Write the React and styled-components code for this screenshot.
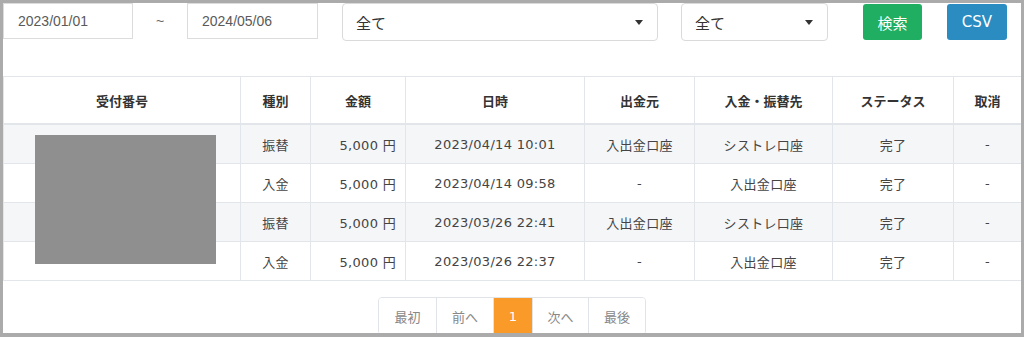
import styled, { createGlobalStyle } from 'styled-components'

const GlobalStyle = createGlobalStyle`
  body {
    margin: 0;
    background: #ffffff;
    font-family: "DejaVu Sans", "Noto Sans CJK JP", sans-serif;
  }
`

const Frame = styled.div`
  width: 1024px;
  height: 337px;
  box-sizing: border-box;
  border-style: solid;
  border-color: #ababab;
  border-width: 3px 3px 4px 3px;
  background: #ffffff;
  overflow: hidden;
  display: flex;
  flex-direction: column;
`

const FilterBar = styled.div`
  display: flex;
  align-items: flex-start;
  height: 38px;
`

const DateInput = styled.div`
  box-sizing: border-box;
  width: ${({ $w }) => $w}px;
  height: 36px;
  border: 1px solid #dcdcdc;
  padding-left: 14px;
  display: flex;
  align-items: center;
  font-family: "Liberation Sans", "Noto Sans CJK JP", sans-serif;
  font-size: 14px;
  color: #5a5a5a;
`

const Tilde = styled.span`
  width: 54px;
  text-align: center;
  line-height: 36px;
  font-family: "Liberation Sans", sans-serif;
  font-size: 14px;
  color: #666;
`

const Select = styled.div`
  box-sizing: border-box;
  width: ${({ $w }) => $w}px;
  height: 38px;
  margin-left: ${({ $ml }) => $ml}px;
  border: 1px solid #dadada;
  border-radius: 4px;
  padding: 0 14px 0 13px;
  display: flex;
  align-items: center;
  justify-content: space-between;
  font-family: "Noto Sans CJK JP", sans-serif;
  font-size: 15px;
  color: #333;
`

const Caret = styled.span`
  width: 0;
  height: 0;
  border-left: 4px solid transparent;
  border-right: 4px solid transparent;
  border-top: 5px solid #333;
  margin-top: 1px;
`

const Button = styled.div`
  box-sizing: border-box;
  width: ${({ $w }) => $w}px;
  height: 36px;
  margin-top: 1px;
  margin-left: ${({ $ml }) => $ml}px;
  border-radius: 3px;
  background: ${({ $bg }) => $bg};
  color: #ffffff;
  display: flex;
  align-items: center;
  justify-content: center;
  font-family: "DejaVu Sans", "Noto Sans CJK JP", sans-serif;
  font-size: 15px;
`

const TableWrap = styled.div`
  position: relative;
  margin-top: 35px;
`

const Table = styled.table`
  width: 100%;
  table-layout: fixed;
  border-collapse: collapse;
  font-family: "DejaVu Sans", "Noto Sans CJK JP", sans-serif;
  font-size: 13px;
  letter-spacing: 0.3px;
  color: #444;
`

const Col = styled.col`
  width: ${({ $w }) => $w}px;
`

const Th = styled.th`
  height: 46px;
  padding: 0;
  border: 1px solid #e2e5e9;
  border-bottom: 2px solid #e2e5e9;
  font-weight: 700;
  letter-spacing: 0;
  color: #333;
  text-align: center;
`

const Row = styled.tr`
  background: ${({ $striped }) => ($striped ? '#f5f6f8' : '#ffffff')};
`

const Td = styled.td`
  height: 38px;
  padding: 0 ${({ $right }) => ($right ? '9px' : '0')} 0 0;
  border: 1px solid #e2e5e9;
  text-align: ${({ $right }) => ($right ? 'right' : 'center')};
  white-space: nowrap;
`

const Redaction = styled.div`
  position: absolute;
  left: 32px;
  top: 59px;
  width: 181px;
  height: 129px;
  background: #8f8f8f;
`

const Pager = styled.div`
  display: flex;
  justify-content: center;
  margin-top: 16px;
`

const PagerGroup = styled.div`
  display: flex;
  border: 1px solid #e0e3e7;
  border-radius: 4px;
  overflow: hidden;
`

const PageItem = styled.div`
  box-sizing: border-box;
  width: ${({ $w }) => $w}px;
  height: 36px;
  display: flex;
  align-items: center;
  justify-content: center;
  border-left: ${({ $first }) => ($first ? 'none' : '1px solid #e0e3e7')};
  background: ${({ $active }) => ($active ? '#fa9a28' : '#ffffff')};
  color: ${({ $active }) => ($active ? '#ffffff' : '#888')};
  font-family: "DejaVu Sans", "Noto Sans CJK JP", sans-serif;
  font-size: 13px;
`

const columns = [
  { label: '受付番号', w: 237 },
  { label: '種別', w: 70 },
  { label: '金額', w: 95 },
  { label: '日時', w: 179 },
  { label: '出金元', w: 110 },
  { label: '入金・振替先', w: 138 },
  { label: 'ステータス', w: 121 },
  { label: '取消', w: 68 },
]

const rows = [
  { kind: '振替', amount: '5,000 円', date: '2023/04/14 10:01', from: '入出金口座', to: 'シストレ口座' },
  { kind: '入金', amount: '5,000 円', date: '2023/04/14 09:58', from: '-', to: '入出金口座' },
  { kind: '振替', amount: '5,000 円', date: '2023/03/26 22:41', from: '入出金口座', to: 'シストレ口座' },
  { kind: '入金', amount: '5,000 円', date: '2023/03/26 22:37', from: '-', to: '入出金口座' },
]

const pages = [
  { label: '最初', w: 57 },
  { label: '前へ', w: 57 },
  { label: '1', w: 39, active: true },
  { label: '次へ', w: 56 },
  { label: '最後', w: 57 },
]

export default function App() {
  return (
    <>
      <GlobalStyle />
      <Frame>
        <FilterBar>
          <DateInput $w={130}>2023/01/01</DateInput>
          <Tilde>~</Tilde>
          <DateInput $w={131}>2024/05/06</DateInput>
          <Select $w={316} $ml={24}>
            全て
            <Caret />
          </Select>
          <Select $w={147} $ml={23}>
            全て
            <Caret />
          </Select>
          <Button $w={59} $ml={35} $bg="#1fae62">検索</Button>
          <Button $w={60} $ml={25} $bg="#2a8cc1">CSV</Button>
        </FilterBar>

        <TableWrap>
          <Table>
            <colgroup>
              {columns.map((c) => (
                <Col key={c.label} $w={c.w} />
              ))}
            </colgroup>
            <thead>
              <tr>
                {columns.map((c) => (
                  <Th key={c.label}>{c.label}</Th>
                ))}
              </tr>
            </thead>
            <tbody>
              {rows.map((r, i) => (
                <Row key={i} $striped={i % 2 === 0}>
                  <Td />
                  <Td>{r.kind}</Td>
                  <Td $right>{r.amount}</Td>
                  <Td>{r.date}</Td>
                  <Td>{r.from}</Td>
                  <Td>{r.to}</Td>
                  <Td>完了</Td>
                  <Td>-</Td>
                </Row>
              ))}
            </tbody>
          </Table>
          <Redaction />
        </TableWrap>

        <Pager>
          <PagerGroup>
            {pages.map((p, i) => (
              <PageItem key={p.label} $w={p.w} $active={p.active} $first={i === 0}>
                {p.label}
              </PageItem>
            ))}
          </PagerGroup>
        </Pager>
      </Frame>
    </>
  )
}
